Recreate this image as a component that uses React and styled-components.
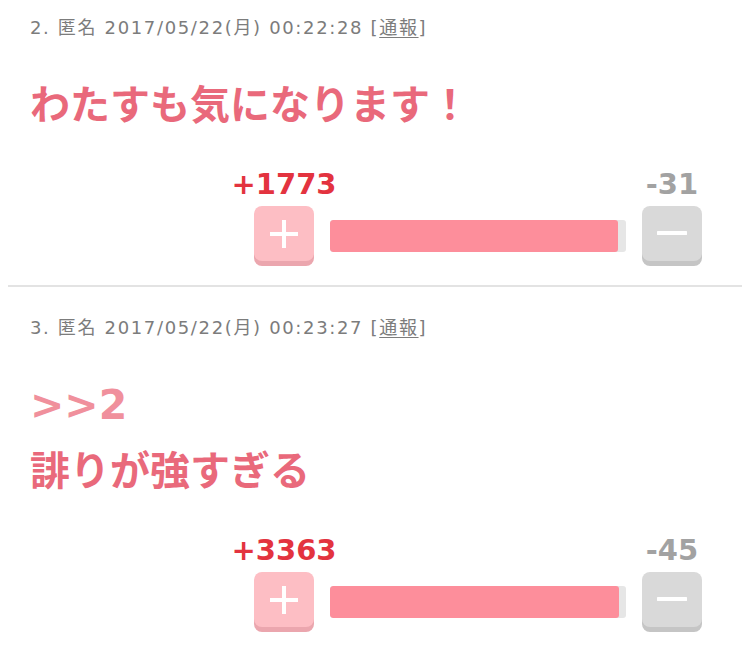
import React from 'react';
import styled, { createGlobalStyle } from 'styled-components';

const GlobalStyle = createGlobalStyle`
  body {
    margin: 0;
    background: #fff;
    font-family: "Noto Sans CJK JP", "Noto Sans", sans-serif;
  }
`;

const Comment = styled.article`
  margin: 0 8px;
  padding: 16px 40px 24px 22px;
  border-bottom: 2px solid #e3e3e3;
  & + & {
    padding-top: 29px;
  }
  &:last-child {
    border-bottom: none;
  }
`;

const Meta = styled.div`
  font-family: "DejaVu Sans", "Noto Sans CJK JP", sans-serif;
  font-size: 18px;
  letter-spacing: 1.65px;
  line-height: 24px;
  color: #7c7c7c;
  white-space: nowrap;
`;

const Report = styled.a`
  color: inherit;
  text-decoration: underline;
  text-underline-offset: 3px;
`;

const Body = styled.div`
  margin-top: 30px;
  font-size: 40px;
  line-height: 64px;
  font-weight: 700;
  color: #e9697b;
  white-space: nowrap;
`;

const Anchor = styled.span`
  display: block;
  padding-top: 5px;
  line-height: 61px;
  color: #f0909c;
  font-family: "DejaVu Sans", sans-serif;
  font-size: 41px;
`;

const VoteRow = styled.div`
  margin-top: 35px;
  display: flex;
  justify-content: flex-end;
  align-items: flex-end;
  gap: 16px;
`;

const VoteCol = styled.div`
  width: 60px;
  display: flex;
  flex-direction: column;
  align-items: center;
  gap: 7px;
`;

const Count = styled.div`
  font-family: "DejaVu Sans", sans-serif;
  font-weight: 700;
  font-size: 29px;
  line-height: 30px;
  white-space: nowrap;
  color: ${(p) => (p.$minus ? '#a2a2a2' : '#e3333f')};
`;

const VoteButton = styled.button`
  width: 60px;
  height: 55px;
  border: none;
  padding: 0;
  border-radius: 8px;
  display: flex;
  align-items: center;
  justify-content: center;
  background: ${(p) => (p.$minus ? '#d9d9d9' : '#fdbec4')};
  box-shadow: 0 5px 0 ${(p) => (p.$minus ? '#c5c5c5' : '#eba6ae')};
  cursor: pointer;
`;

const Track = styled.div`
  width: 296px;
  height: 32px;
  margin-bottom: 9px;
  border-radius: 3px;
  background: #e6e6e6;
  overflow: hidden;
`;

const Fill = styled.div`
  height: 100%;
  background: #fd8e9b;
  border-radius: 3px;
`;

const PlusIcon = () => (
  <svg width="30" height="30" viewBox="0 0 30 30">
    <path d="M15 1v28M1 15h28" stroke="#fff" strokeWidth="4" />
  </svg>
);

const MinusIcon = () => (
  <svg width="30" height="30" viewBox="0 0 30 30">
    <path d="M1 14h28" stroke="#fff" strokeWidth="4" strokeLinecap="round" />
  </svg>
);

const comments = [
  {
    no: 2,
    time: '2017/05/22(月) 00:22:28',
    anchor: null,
    text: 'わたすも気になります！',
    plus: 1773,
    minus: 31,
  },
  {
    no: 3,
    time: '2017/05/22(月) 00:23:27',
    anchor: '>>2',
    text: '誹りが強すぎる',
    plus: 3363,
    minus: 45,
  },
];

const Votes = ({ plus, minus }) => {
  const pct = (plus / (plus + minus)) * 99;
  return (
    <VoteRow>
      <VoteCol>
        <Count>+{plus}</Count>
        <VoteButton aria-label="plus">
          <PlusIcon />
        </VoteButton>
      </VoteCol>
      <Track>
        <Fill style={{ width: `${pct}%` }} />
      </Track>
      <VoteCol>
        <Count $minus>-{minus}</Count>
        <VoteButton $minus aria-label="minus">
          <MinusIcon />
        </VoteButton>
      </VoteCol>
    </VoteRow>
  );
};

export default function App() {
  return (
    <>
      <GlobalStyle />
      {comments.map((c) => (
        <Comment key={c.no}>
          <Meta>
            {c.no}. 匿名 {c.time} [<Report>通報</Report>]
          </Meta>
          <Body>
            {c.anchor && <Anchor>{c.anchor}</Anchor>}
            {c.text}
          </Body>
          <Votes plus={c.plus} minus={c.minus} />
        </Comment>
      ))}
    </>
  );
}
